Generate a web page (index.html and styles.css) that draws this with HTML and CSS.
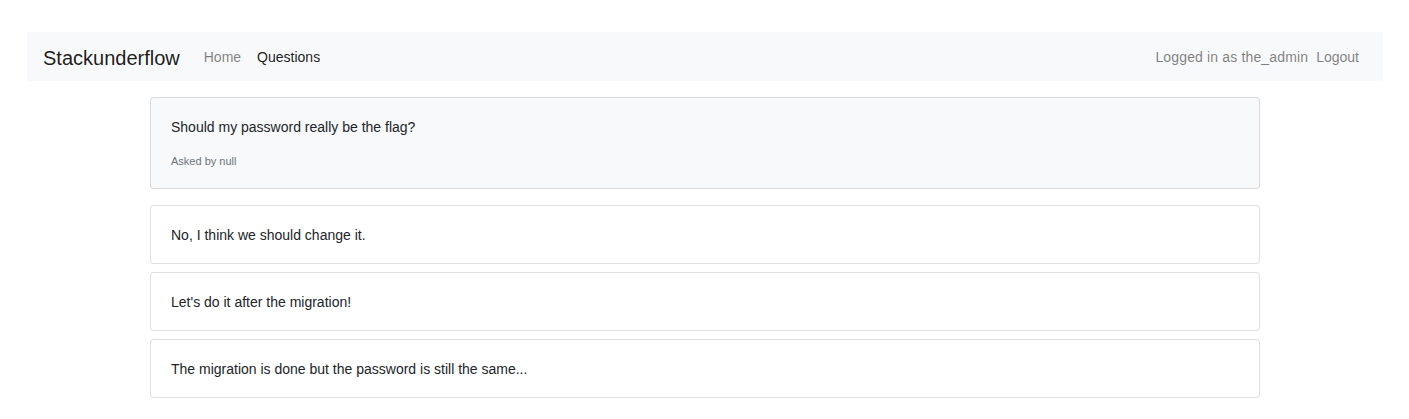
FILE: index.html
```html
<!DOCTYPE html>
<html lang="en">
<head>
<meta charset="utf-8">
<title>Stackunderflow</title>
<link rel="stylesheet" href="styles.css">
</head>
<body>
<nav class="navbar">
  <a class="brand" href="#">Stackunderflow</a>
  <ul class="nav">
    <li><a class="nav-link" href="#">Home</a></li>
    <li><a class="nav-link active" href="#">Questions</a></li>
  </ul>
  <div class="nav-right">
    <span class="nav-text">Logged in as the_admin</span>
    <a class="nav-link" href="#">Logout</a>
  </div>
</nav>
<main class="container">
  <div class="card question">
    <p class="card-title">Should my password really be the flag?</p>
    <p class="meta">Asked by null</p>
  </div>
  <div class="answers">
    <div class="card"><p class="card-title">No, I think we should change it.</p></div>
    <div class="card"><p class="card-title">Let's do it after the migration!</p></div>
    <div class="card"><p class="card-title">The migration is done but the password is still the same...</p></div>
  </div>
</main>
</body>
</html>
```
FILE: styles.css
```css
* { box-sizing: border-box; }
body {
  margin: 0;
  font-family: "Liberation Sans", Arial, sans-serif;
  color: #212529;
  background: #fff;
}
a { text-decoration: none; }
.navbar {
  margin: 32px 26px 0 27px;
  height: 49px;
  background: #f8f9fa;
  display: flex;
  align-items: center;
  padding: 2px 16px 0;
}
.brand {
  font-size: 20px;
  color: rgba(0,0,0,.9);
  margin-right: 16px;
  line-height: 30px;
}
.nav {
  list-style: none;
  margin: 0;
  padding: 0;
  display: flex;
}
.nav-link {
  display: block;
  font-size: 14px;
  line-height: 21px;
  padding: 0 8px;
  color: rgba(0,0,0,.5);
}
.nav-link.active { color: rgba(0,0,0,.9); }
.nav-right {
  margin-left: auto;
  display: flex;
  align-items: center;
}
.nav-text {
  font-size: 14px;
  line-height: 21px;
  color: rgba(0,0,0,.5);
  letter-spacing: 0.15px;
}
.container {
  width: 1110px;
  margin: 16px 0 0 150px;
}
.card {
  border: 1px solid rgba(0,0,0,.125);
  border-radius: 4px;
  padding: 21px 20px 20px;
  background: #fff;
}
.card p { margin: 0; }
.card-title {
  font-size: 14px;
  line-height: 16px;
}
.question {
  background: #f8f9fa;
  display: flex;
  flex-direction: column;
  gap: 20px;
  margin-bottom: 16px;
}
.meta {
  font-size: 11px;
  line-height: 13px;
  color: #6c757d;
}
.answers {
  display: flex;
  flex-direction: column;
  gap: 8px;
}
```
